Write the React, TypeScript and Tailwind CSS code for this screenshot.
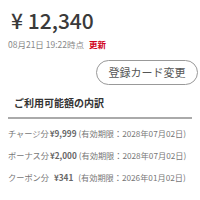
import React from "react";

const font = { fontFamily: '"Noto Sans CJK JP", "Noto Sans", sans-serif' };

export default function App() {
  return (
    <div className="w-[200px] h-[200px] bg-white text-[#555] overflow-hidden" style={font}>
      <div className="pl-[11px] pt-[6px] text-[21px] leading-[28px] font-medium text-[#3a3a3a]">¥ 12,340</div>
      <div className="pl-[8px] mt-[3px] flex items-center text-[8.5px] leading-[14px] text-[#888]">
        <span>08月21日 19:22時点</span>
        <span className="ml-[5px] text-[#d0021b] font-bold">更新</span>
      </div>
      <div className="flex justify-end pr-[2px] mt-[9px]">
        <div className="w-[102px] h-[25px] rounded-full border border-[#999] flex items-center justify-center text-[11px] text-[#555]">
          登録カード変更
        </div>
      </div>
      <div className="mx-[8px] mt-[10px] border-b-2 border-[#aaa] pl-[6px] pb-[6px] text-[10px] leading-[16px] font-bold text-[#333]">
        ご利用可能額の内訳
      </div>
      <div className="pl-[8px] pt-[7px] flex flex-col gap-[8px] text-[8.2px] leading-[14px] text-[#777] whitespace-nowrap">
        <div>チャージ分<span className="ml-[1px] font-bold text-[#666]">¥9,999</span><span className="ml-[2px]">(有効期限：2028年07月02日)</span></div>
        <div>ボーナス分<span className="ml-[1px] font-bold text-[#666]">¥2,000</span><span className="ml-[2px]">(有効期限：2028年07月02日)</span></div>
        <div>クーポン分<span className="ml-[5px] font-bold text-[#666]">¥341</span><span className="ml-[5px]">(有効期限：2026年01月02日)</span></div>
      </div>
    </div>
  );
}
